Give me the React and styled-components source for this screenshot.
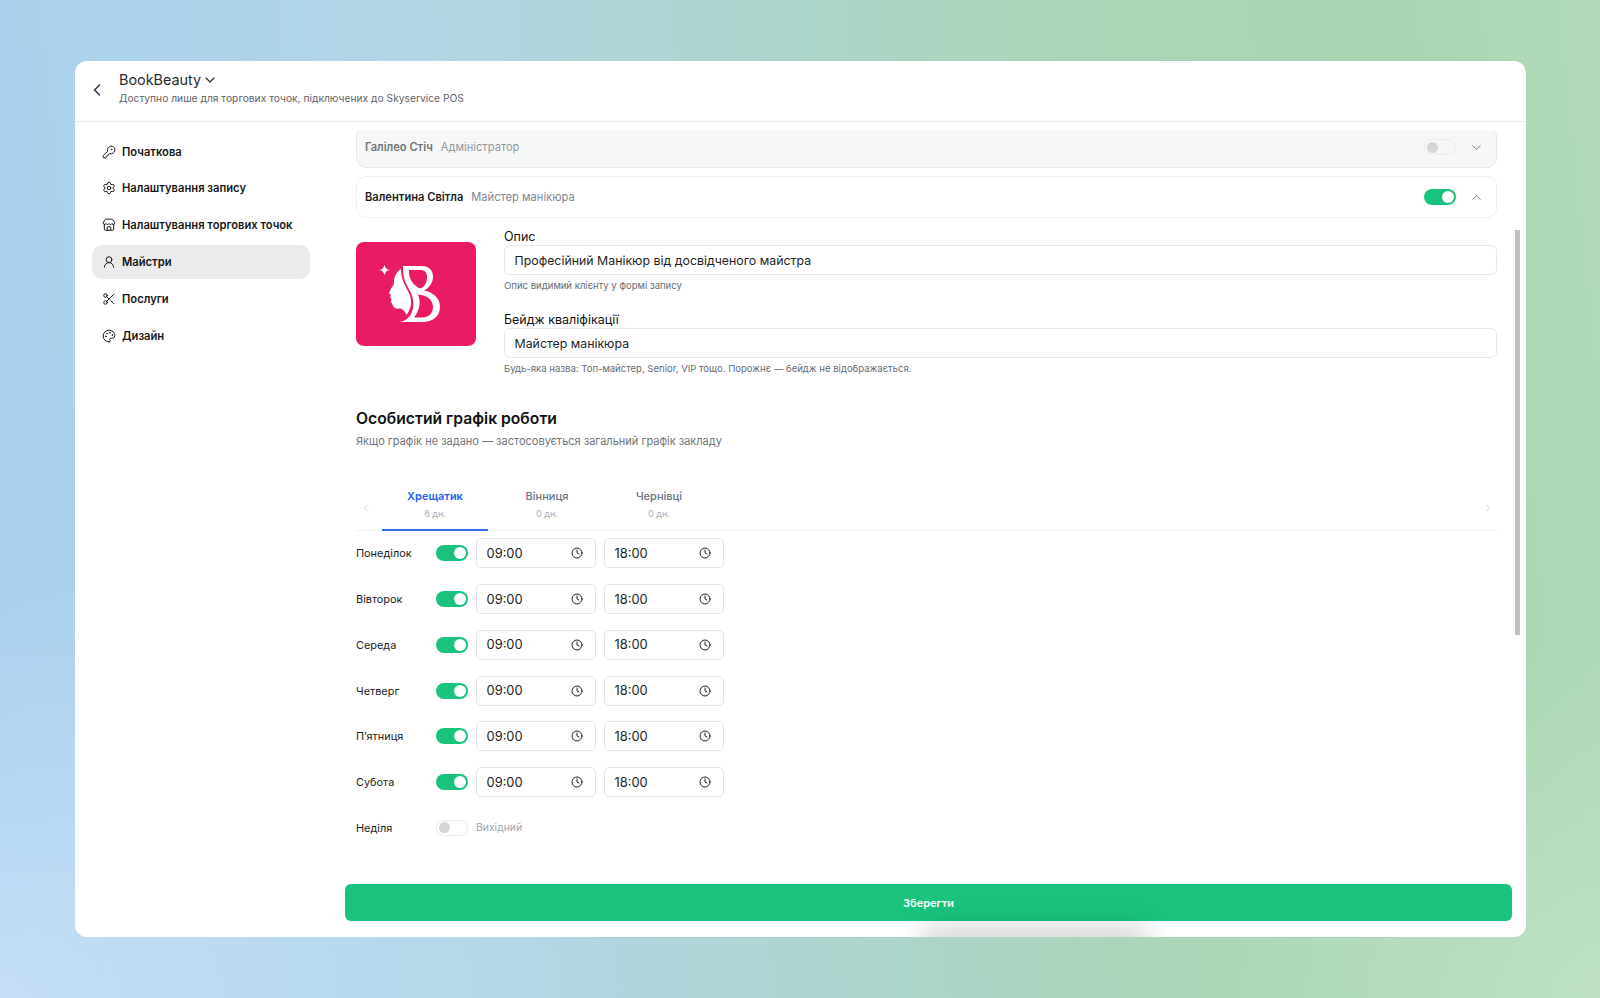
import React from 'react';
import styled, { createGlobalStyle } from 'styled-components';
import { KeyRound, Settings, Store, UserRound, Scissors, Palette, ChevronLeft, ChevronRight, ChevronDown, ChevronUp, Clock } from 'lucide-react';

const Global = createGlobalStyle`
  html, body { margin: 0; padding: 0; }
  body { font-family: Inter, "Noto Sans", sans-serif; -webkit-font-smoothing: antialiased; }
  * { box-sizing: border-box; }
`;

const Page = styled.div`
  width: 1600px;
  height: 998px;
  padding: 61px 74px 61px 75px;
  overflow: hidden;
  background:
    radial-gradient(ellipse 620px 420px at 0% 100%, rgba(205,228,248,.75), rgba(205,228,248,0) 100%),
    radial-gradient(ellipse 420px 360px at 100% 100%, rgba(195,228,200,.8), rgba(195,228,200,0) 100%),
    linear-gradient(84deg, #a9cfef 0%, #b1d6e6 30%, #abd5cb 52%, #a9d6b6 70%, #a9d5b3 88%, #b2dab8 100%);
`;
const Card = styled.div`
  position: relative;
  height: 876px;
  background: #fff;
  border-radius: 12px;
  overflow: hidden;
  display: flex;
  flex-direction: column;
`;
const Header = styled.header`
  height: 61px;
  flex: none;
  border-bottom: 1px solid #ececec;
  display: flex;
  align-items: center;
  padding: 0 0 5px 12px;
  color: #2b3a4a;
`;
const BackBtn = styled.div`
  width: 20px;
  display: flex;
  justify-content: center;
  margin-right: 12px;
  margin-top: 3px;
`;
const HeadText = styled.div`
  display: flex;
  flex-direction: column;
  gap: 1px;
  margin-top: -3px;
`;
const TitleRow = styled.div`
  display: flex;
  align-items: center;
  gap: 1px;
  font-size: 14.4px;
  line-height: 20px;
  color: #2a2a2a;
`;
const HeadSub = styled.div`
  font-size: 10.25px;
  line-height: 14px;
  color: #5f6368;
`;
const Body = styled.div`
  flex: 1;
  min-height: 0;
  display: flex;
`;
const Sidebar = styled.nav`
  width: 270px;
  flex: none;
  padding: 12.7px 35px 0 17px;
  display: flex;
  flex-direction: column;
  gap: 2.8px;
`;
const NavItem = styled.div`
  height: 34px;
  border-radius: 10px;
  padding-left: 10px;
  display: flex;
  align-items: center;
  gap: 6px;
  font-size: 11.2px;
  font-weight: 600;
  color: #171717;
  background: ${p => (p.$active ? '#ebebeb' : 'transparent')};
`;
const Main = styled.main`
  flex: 1;
  min-width: 0;
  display: flex;
  flex-direction: column;
  padding: 8px 14px 16px 0;
`;
const Scroll = styled.div`
  position: relative;
  flex: 1;
  min-height: 0;
  overflow: visible;
  overflow-y: clip;
  padding: 0 15px 0 11px;
`;
const Bar = styled.div`
  position: absolute;
  right: -8px;
  top: 100px;
  width: 5px;
  height: 405px;
  background: #c1c1c1;
`;
const Row = styled.div`
  height: 42px;
  margin-top: ${p => (p.$muted ? '-4px' : '8px')};
  border: 1px solid ${p => (p.$muted ? '#e6e8ea' : '#eceef0')};
  border-radius: 10px;
  background: ${p => (p.$muted ? '#f6f7f7' : '#fff')};
  display: flex;
  align-items: center;
  padding: 0 12px 0 8px;
  font-size: 11.15px;
  gap: 8px;
`;
const RowName = styled.span`
  font-weight: 600;
  color: ${p => (p.$muted ? '#6f7479' : '#1c1c1c')};
`;
const RowRole = styled.span`
  color: ${p => (p.$muted ? '#93989e' : '#808690')};
  flex: 1;
`;
const Toggle = styled.span`
  width: 32px;
  height: 16px;
  flex: none;
  border-radius: 8px;
  display: flex;
  align-items: center;
  padding: 0 2px;
  justify-content: ${p => (p.$on ? 'flex-end' : 'flex-start')};
  background: ${p => (p.$on ? '#19c37d' : 'transparent')};
  border: ${p => (p.$on ? 'none' : '1px solid #ececec')};
  &::after {
    content: '';
    width: ${p => (p.$on ? '12px' : '11px')};
    height: ${p => (p.$on ? '12px' : '11px')};
    border-radius: 50%;
    background: ${p => (p.$on ? '#fff' : '#d6d6d6')};
  }
`;
const Chevron = styled.span`
  width: 16px;
  display: flex;
  justify-content: center;
  margin-left: 4px;
  color: #7f8490;
`;
const Profile = styled.section`
  display: flex;
  gap: 28px;
  margin-top: 9px;
`;
const Logo = styled.div`
  width: 120px;
  height: 104px;
  flex: none;
  margin-top: 15px;
  border-radius: 8px;
  background: #e81b64;
  svg { display: block; }
`;
const Fields = styled.div`
  flex: 1;
  display: flex;
  flex-direction: column;
  gap: 18px;
`;
const Field = styled.div`
  display: flex;
  flex-direction: column;
`;
const Label = styled.label`
  padding-top: 0.6px;
  height: 18px;
  font-size: 12.5px;
  line-height: 17px;
  color: #111;
`;
const TextInput = styled.div`
  height: 30px;
  border: 1px solid #e5e7eb;
  border-radius: 6px;
  padding-left: 9.5px;
  display: flex;
  align-items: center;
  font-size: 12.35px;
  color: #1f1f1f;
`;
const Hint = styled.div`
  margin-top: 5px;
  font-size: 9.55px;
  line-height: 12px;
  color: #666b73;
`;
const SectionTitle = styled.h2`
  margin: 32px 0 0;
  font-size: 15.7px;
  line-height: 24px;
  font-weight: 600;
  color: #111;
`;
const SectionSub = styled.p`
  margin: 2px 0 0;
  font-size: 11px;
  line-height: 16px;
  color: #70757d;
`;
const Tabs = styled.div`
  margin-top: 33px;
  height: 49px;
  border-bottom: 1px solid #eef0f2;
  display: flex;
  align-items: stretch;
  color: #d2d5da;
`;
const Arrow = styled.span`
  width: 26px;
  display: flex;
  align-items: center;
  justify-content: ${p => (p.$end ? 'flex-end' : 'flex-start')};
  padding: 0 ${p => (p.$end ? '3px' : '0')} 0 ${p => (p.$end ? '0' : '4px')};
  margin-top: 3px;
`;
const TabList = styled.div`
  flex: 1;
  display: flex;
  gap: 6px;
`;
const Tab = styled.div`
  width: 106px;
  margin-bottom: -1px;
  padding-top: 6px;
  border-bottom: 2px solid ${p => (p.$active ? '#2f6fed' : 'transparent')};
  text-align: center;
  font-size: 11px;
  line-height: 16px;
  font-weight: ${p => (p.$active ? 600 : 500)};
  color: ${p => (p.$active ? '#2563eb' : '#6b7280')};
`;
const TabSub = styled.div`
  margin-top: 3px;
  font-size: 9px;
  line-height: 14px;
  font-weight: 400;
  color: #a9aeb6;
`;
const Schedule = styled.div`
  margin-top: 7.3px;
  display: flex;
  flex-direction: column;
  gap: 15.75px;
`;
const Day = styled.div`
  height: 30px;
  display: flex;
  align-items: center;
`;
const DayName = styled.span`
  width: 80px;
  flex: none;
  font-size: 10.9px;
  color: #1c1c1c;
`;
const TimeBox = styled.div`
  width: 120px;
  height: 30px;
  margin-left: 8px;
  border: 1px solid #e3e5e9;
  border-radius: 5px;
  padding: 0 12px 0 9.5px;
  display: flex;
  align-items: center;
  justify-content: space-between;
  font-size: 12.9px;
  color: #222;
`;
const DayOff = styled.span`
  margin-left: 8px;
  font-size: 10.4px;
  color: #a0a5ad;
`;
const Save = styled.button`
  height: 37px;
  flex: none;
  border: none;
  border-radius: 6px;
  background: #19c37d;
  color: #fff;
  font: 600 11px Inter, sans-serif;
`;
const Glow = styled.div`
  position: absolute;
  left: 848px;
  bottom: -20px;
  width: 225px;
  height: 30px;
  background: rgba(0,0,0,.17);
  filter: blur(13px);
`;

const nav = [
  [KeyRound, 'Початкова'],
  [Settings, 'Налаштування запису'],
  [Store, 'Налаштування торгових точок'],
  [UserRound, 'Майстри', true],
  [Scissors, 'Послуги'],
  [Palette, 'Дизайн'],
];
const days = ['Понеділок', 'Вівторок', 'Середа', 'Четверг', 'П’ятниця', 'Субота'];

const BrandMark = () => (
  <svg width="120" height="104" viewBox="0 0 120 104" fill="#fff">
    <path d="M28.5 22.5 C29.1 26 30.5 27.4 34 28 C30.5 28.6 29.1 30 28.5 33.5 C27.9 30 26.5 28.6 23 28 C26.5 27.4 27.9 26 28.5 22.5Z" />
    <path d="M45 27 C40 30 37.5 36 38 42 C36 45 34 48 33 51 L35 53 L34 55.5 L35.5 57 L35 60 L37 63.5 C37.5 66.5 41 67 44 66.5 C47 67 49.5 70 50.5 73 C55.5 67 56.5 58 53 51 C49.5 44 45 38 45 27Z" />
    <path fillRule="evenodd" d="M47 24 C46.5 36 50 42 54 49 C58 56 58.5 66 55 72 C53 76 49 79 44 80 H66 C77 80 84 74 84 65 C84 56 77 50 68 48.5 C73 46 77 41 77 35 C77 28 73 24 66 24Z M53 28 C52.5 34 55 40 60 44 C62 45.5 63 46 64 46.5 C68.5 45 71 41 71 35 C71 30 68.5 28 64 28Z M62 52.5 C65 59 64 68 58 75.5 H66 C73 75.5 77 71 77 65 C77 58 71 53 62 52.5Z" />
  </svg>
);

export default function App() {
  return (
    <Page>
      <Global />
      <Card>
        <Header>
          <BackBtn><ChevronLeft size={20} strokeWidth={1.9} /></BackBtn>
          <HeadText>
            <TitleRow>BookBeauty <ChevronDown size={16} strokeWidth={1.8} /></TitleRow>
            <HeadSub>Доступно лише для торгових точок, підключених до Skyservice POS</HeadSub>
          </HeadText>
        </Header>
        <Body>
          <Sidebar>
            {nav.map(([Icon, text, active]) => (
              <NavItem key={text} $active={active}>
                <Icon size={14} strokeWidth={1.7} />
                {text}
              </NavItem>
            ))}
          </Sidebar>
          <Main>
            <Scroll>
              <Bar />
              <Row $muted>
                <RowName $muted>Галілео Стіч</RowName>
                <RowRole $muted>Адміністратор</RowRole>
                <Toggle />
                <Chevron><ChevronDown size={15} strokeWidth={1.6} /></Chevron>
              </Row>
              <Row>
                <RowName>Валентина Світла</RowName>
                <RowRole>Майстер манікюра</RowRole>
                <Toggle $on />
                <Chevron><ChevronUp size={15} strokeWidth={1.6} /></Chevron>
              </Row>
              <Profile>
                <Logo><BrandMark /></Logo>
                <Fields>
                  <Field>
                    <Label>Опис</Label>
                    <TextInput>Професійний Манікюр від досвідченого майстра</TextInput>
                    <Hint>Опис видимий клієнту у формі запису</Hint>
                  </Field>
                  <Field>
                    <Label>Бейдж кваліфікації</Label>
                    <TextInput>Майстер манікюра</TextInput>
                    <Hint>Будь-яка назва: Топ-майстер, Senior, VIP тощо. Порожнє — бейдж не відображається.</Hint>
                  </Field>
                </Fields>
              </Profile>
              <SectionTitle>Особистий графік роботи</SectionTitle>
              <SectionSub>Якщо графік не задано — застосовується загальний графік закладу</SectionSub>
              <Tabs>
                <Arrow><ChevronLeft size={12} /></Arrow>
                <TabList>
                  <Tab $active>Хрещатик<TabSub>6 дн.</TabSub></Tab>
                  <Tab>Вінниця<TabSub>0 дн.</TabSub></Tab>
                  <Tab>Чернівці<TabSub>0 дн.</TabSub></Tab>
                </TabList>
                <Arrow $end><ChevronRight size={12} /></Arrow>
              </Tabs>
              <Schedule>
                {days.map(d => (
                  <Day key={d}>
                    <DayName>{d}</DayName>
                    <Toggle $on />
                    <TimeBox>09:00<Clock size={12} strokeWidth={2} /></TimeBox>
                    <TimeBox>18:00<Clock size={12} strokeWidth={2} /></TimeBox>
                  </Day>
                ))}
                <Day>
                  <DayName>Неділя</DayName>
                  <Toggle />
                  <DayOff>Вихідний</DayOff>
                </Day>
              </Schedule>
            </Scroll>
            <Save>Зберегти</Save>
          </Main>
        </Body>
        <Glow />
      </Card>
    </Page>
  );
}
